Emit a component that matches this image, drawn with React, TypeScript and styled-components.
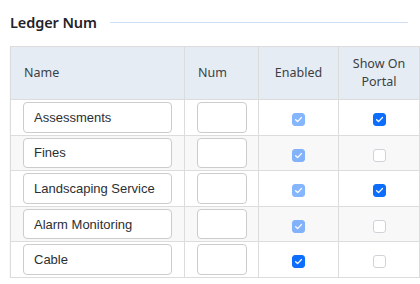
import React from "react";
import styled, { createGlobalStyle } from "styled-components";

const Global = createGlobalStyle`
  html, body { margin: 0; padding: 0; background: #fff; }
  body { font-family: "Open Sans", "Noto Sans", sans-serif; }
  * { box-sizing: border-box; }
`;

const Page = styled.div`
  padding: 0 1px 0 10px;
  width: 420px;
`;

const TitleRow = styled.div`
  display: flex;
  align-items: center;
  gap: 13px;
  height: 44px;
  padding-right: 11px;
`;

const Title = styled.h2`
  margin: 0;
  font-family: "Noto Sans", "Open Sans", sans-serif;
  font-size: 14.5px;
  font-weight: 600;
  color: #1f2329;
  white-space: nowrap;
  letter-spacing: -0.1px;
`;

const Rule = styled.div`
  flex: 1;
  height: 1px;
  background: #cfe0f6;
`;

const Table = styled.table`
  width: 409px;
  margin-top: 2px;
  border-collapse: collapse;
  border: 1px solid #dcdcdc;
  box-shadow: 0 1px 1px rgba(0, 0, 0, 0.12);
  table-layout: fixed;
`;

const Th = styled.th<{ $center?: boolean; $w: number }>`
  width: ${(p) => p.$w}px;
  height: 53px;
  background: #e6ecf4;
  border: 1px solid #dcdcdc;
  font-family: "Noto Sans", "Open Sans", sans-serif;
  font-size: 12.5px;
  font-weight: 400;
  line-height: 18px;
  color: #3a3f45;
  text-align: ${(p) => (p.$center ? "center" : "left")};
  padding: 0 ${(p) => (p.$center ? 8 : 13)}px;
  vertical-align: middle;
`;

const Tr = styled.tr<{ $striped: boolean }>`
  background: ${(p) => (p.$striped ? "#f8f8f8" : "#fff")};
`;

const Td = styled.td<{ $center?: boolean }>`
  border: 1px solid #dcdcdc;
  padding: 2px 12px;
  text-align: ${(p) => (p.$center ? "center" : "left")};
  vertical-align: middle;
`;

const TextInput = styled.input`
  display: block;
  width: 100%;
  height: 30.6px;
  border: 1px solid #cccccc;
  border-radius: 4px;
  background: #fff;
  padding: 0 10px;
  font-family: "Liberation Sans", Arial, sans-serif;
  font-size: 13px;
  color: #2b2f33;
  outline: none;
`;

const NumInput = styled(TextInput)`
  width: 50px;
`;

const Box = styled.span<{ $checked: boolean; $disabled: boolean }>`
  display: inline-flex;
  align-items: center;
  justify-content: center;
  width: 13px;
  height: 13px;
  border-radius: 3px;
  margin-top: 1px;
  vertical-align: middle;
  background: ${(p) => (p.$checked ? "#0d6efd" : "#fff")};
  border: 1px solid ${(p) => (p.$checked ? "#0d6efd" : "#cfd3d8")};
  opacity: ${(p) => (p.$disabled ? 0.5 : 1)};
`;

function Check({ checked, disabled }: { checked: boolean; disabled?: boolean }) {
  return (
    <Box $checked={checked} $disabled={!!disabled}>
      {checked && (
        <svg width="9" height="9" viewBox="0 0 10 10">
          <path d="M1.8 5.2 L4 7.3 L8.3 2.8" fill="none" stroke="#fff" strokeWidth="1.4" strokeLinecap="round" strokeLinejoin="round" />
        </svg>
      )}
    </Box>
  );
}

const rows = [
  { name: "Assessments", enabled: true, enDisabled: true, portal: true },
  { name: "Fines", enabled: true, enDisabled: true, portal: false },
  { name: "Landscaping Service", enabled: true, enDisabled: true, portal: true },
  { name: "Alarm Monitoring", enabled: true, enDisabled: true, portal: false },
  { name: "Cable", enabled: true, enDisabled: false, portal: false },
];

export default function App() {
  return (
    <>
      <Global />
      <Page>
        <TitleRow>
          <Title>Ledger Num</Title>
          <Rule />
        </TitleRow>
        <Table>
          <thead>
            <tr>
              <Th $w={174}>Name</Th>
              <Th $w={74}>Num</Th>
              <Th $w={80} $center>Enabled</Th>
              <Th $w={81} $center>Show On Portal</Th>
            </tr>
          </thead>
          <tbody>
            {rows.map((r, i) => (
              <Tr key={r.name} $striped={i % 2 === 1}>
                <Td>
                  <TextInput defaultValue={r.name} />
                </Td>
                <Td>
                  <NumInput defaultValue="" />
                </Td>
                <Td $center>
                  <Check checked={r.enabled} disabled={r.enDisabled} />
                </Td>
                <Td $center>
                  <Check checked={r.portal} />
                </Td>
              </Tr>
            ))}
          </tbody>
        </Table>
      </Page>
    </>
  );
}
